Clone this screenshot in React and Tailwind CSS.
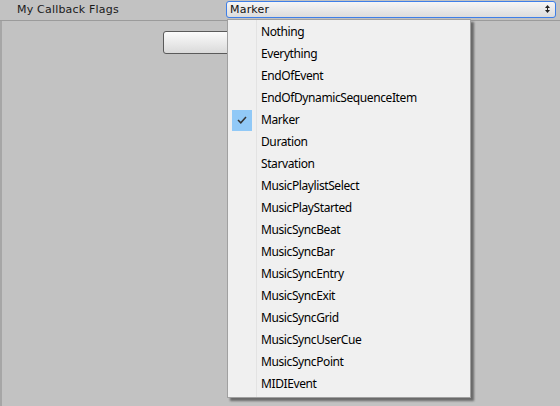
import React from "react";

const items = [
  "Nothing",
  "Everything",
  "EndOfEvent",
  "EndOfDynamicSequenceItem",
  "Marker",
  "Duration",
  "Starvation",
  "MusicPlaylistSelect",
  "MusicPlayStarted",
  "MusicSyncBeat",
  "MusicSyncBar",
  "MusicSyncEntry",
  "MusicSyncExit",
  "MusicSyncGrid",
  "MusicSyncUserCue",
  "MusicSyncPoint",
  "MIDIEvent",
];

export default function App() {
  return (
    <div className="relative w-[560px] h-[406px] bg-[#c2c2c2] overflow-hidden">
      {/* header row */}
      <div className="flex items-center h-[21px] border-b border-[#9b9b9b]">
        <div className="w-[226px] pl-[17px] text-[11px] text-[#1a1a1a] font-['DejaVu_Sans',sans-serif] tracking-[0.2px] leading-none pb-[2px]">
          My Callback Flags
        </div>
        <div className="flex items-center justify-between w-[330px] h-[17px] mb-[2px] rounded-[3px] border border-[#3e7fe8] bg-gradient-to-b from-[#f6f6f6] to-[#dcdcdc] pl-[3px] pr-[5px]">
          <span className="text-[11px] text-[#111] font-['DejaVu_Sans',sans-serif] leading-none tracking-[0.2px]">
            Marker
          </span>
          <svg width="5" height="8" viewBox="0 0 5 8">
            <path d="M2.5 0 L5 3 L0 3 Z" fill="#222" />
            <path d="M0 5 L5 5 L2.5 8 Z" fill="#222" />
            <rect x="2" y="3" width="1" height="2" fill="#222" />
          </svg>
        </div>
      </div>

      {/* content */}
      <div className="h-[385px] border-l-2 border-[#a6a6a6] pt-[10px] pl-[161px]">
        <div className="w-[234px] h-[23px] rounded-[3px] border border-[#5a5a5a] bg-gradient-to-b from-[#fbfbfb] to-[#dadada]" />
      </div>

      {/* dropdown menu overlay */}
      <div className="absolute left-[227px] top-[19px] w-[244px] h-[379px] bg-[#f0f0f0] border border-[#a0a0a0] shadow-[3px_3px_2px_rgba(0,0,0,0.45)] py-[1px] font-['Noto_Sans','Open_Sans',sans-serif]">
        <div className="absolute left-[28px] top-0 bottom-0 w-px bg-[#e3e3e3]" />
        {items.map((label) => (
          <div key={label} className="relative flex items-center h-[22px]">
            <div className="w-[33px] h-[22px] flex items-center pl-[4px]">
              {label === "Marker" && (
                <div className="w-[20px] h-[21px] bg-[#91c9f7] flex items-center justify-center">
                  <svg width="10" height="8" viewBox="0 0 10 8">
                    <path d="M1 4 L3.8 6.8 L9 1" fill="none" stroke="#333" strokeWidth="1.5" />
                  </svg>
                </div>
              )}
            </div>
            <span className="text-[12px] text-black leading-none tracking-[-0.4px]">{label}</span>
          </div>
        ))}
      </div>
    </div>
  );
}
